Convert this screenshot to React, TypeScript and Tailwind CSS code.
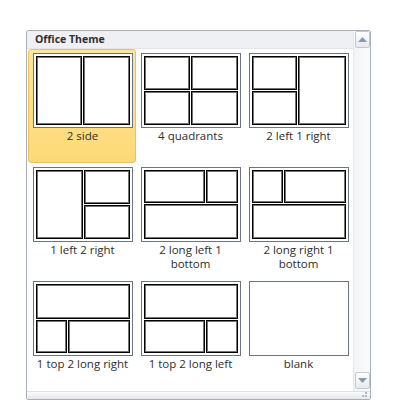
import React from "react";

const R = ({ g = 1 }: { g?: number }) => (
  <div
    className={`border border-black shadow-[inset_0_0_0_1px_rgba(0,0,0,0.55)] bg-white ${g === 2 ? "grow-[2]" : "grow"} basis-0 min-w-0 min-h-0`}
  />
);

const Frame = ({ children }: { children?: React.ReactNode }) => (
  <div className="w-[100px] h-[75px] border border-[#6b7385] bg-white p-[2px] flex">
    {children}
  </div>
);

const layouts: { label: string[]; body: React.ReactNode }[] = [
  {
    label: ["2 side"],
    body: (
      <div className="flex flex-row gap-px flex-1">
        <R />
        <R />
      </div>
    ),
  },
  {
    label: ["4 quadrants"],
    body: (
      <div className="flex flex-col gap-px flex-1">
        <div className="flex flex-row gap-px flex-1 basis-0">
          <R />
          <R />
        </div>
        <div className="flex flex-row gap-px flex-1 basis-0">
          <R />
          <R />
        </div>
      </div>
    ),
  },
  {
    label: ["2 left 1 right"],
    body: (
      <div className="flex flex-row gap-px flex-1">
        <div className="flex flex-col gap-px flex-1 basis-0">
          <R />
          <R />
        </div>
        <R />
      </div>
    ),
  },
  {
    label: ["1 left 2 right"],
    body: (
      <div className="flex flex-row gap-px flex-1">
        <R />
        <div className="flex flex-col gap-px flex-1 basis-0">
          <R />
          <R />
        </div>
      </div>
    ),
  },
  {
    label: ["2 long left 1", "bottom"],
    body: (
      <div className="flex flex-col gap-px flex-1">
        <div className="flex flex-row gap-px flex-1 basis-0">
          <R g={2} />
          <R />
        </div>
        <R />
      </div>
    ),
  },
  {
    label: ["2 long right 1", "bottom"],
    body: (
      <div className="flex flex-col gap-px flex-1">
        <div className="flex flex-row gap-px flex-1 basis-0">
          <R />
          <R g={2} />
        </div>
        <R />
      </div>
    ),
  },
  {
    label: ["1 top 2 long right"],
    body: (
      <div className="flex flex-col gap-px flex-1">
        <R />
        <div className="flex flex-row gap-px flex-1 basis-0">
          <R />
          <R g={2} />
        </div>
      </div>
    ),
  },
  {
    label: ["1 top 2 long left"],
    body: (
      <div className="flex flex-col gap-px flex-1">
        <R />
        <div className="flex flex-row gap-px flex-1 basis-0">
          <R g={2} />
          <R />
        </div>
      </div>
    ),
  },
  { label: ["blank"], body: null },
];

const ScrollBtn = ({ up }: { up: boolean }) => (
  <div className="h-[17px] w-[15px] rounded-[2px] border border-[#c2c7d0] bg-gradient-to-b from-white to-[#e6e9ee] flex items-center justify-center">
    <svg width="9" height="5" viewBox="0 0 9 5">
      {up ? (
        <polygon points="0,5 9,5 4.5,0" fill="#8597bd" />
      ) : (
        <polygon points="0,0 9,0 4.5,5" fill="#8597bd" />
      )}
    </svg>
  </div>
);

export default function App() {
  return (
    <div
      className="w-[403px] h-[418px] bg-white pt-[30px] pl-[26px]"
      style={{ fontFamily: '"Open Sans", "Noto Sans", Arial, sans-serif' }}
    >
      <div className="w-[345px] h-[370px] border border-[#a9afb8] rounded-[2px] flex flex-col overflow-hidden">
        <div className="flex flex-row flex-1 min-h-0">
          <div className="w-[326px] flex flex-col">
            <div className="h-[18px] bg-[#eef0f3] border-b border-[#e2e5e9] pl-[8px] flex items-center text-[10.5px] font-bold text-[#2f2f2f] leading-none">
              Office Theme
            </div>
            <div className="grid grid-cols-[108px_108px_108px] auto-rows-[114px] pl-px">
              {layouts.map((l, i) => (
                <div
                  key={i}
                  className={`flex flex-col items-center pt-[3px] pl-px ${
                    i === 0
                      ? "bg-gradient-to-b from-[#fee69e] to-[#fdd977] border border-[#eac15a] rounded-[3px]"
                      : "border border-transparent"
                  }`}
                >
                  <Frame>{l.body}</Frame>
                  <div className="mt-[1px] text-[11.5px] leading-[14px] text-[#2e2e2e] text-center whitespace-nowrap">
                    {l.label[0]}
                    {l.label.length > 1 && (
                      <>
                        <br />
                        {l.label[1]}
                      </>
                    )}
                  </div>
                </div>
              ))}
            </div>
          </div>
          <div className="w-[17px] border-l border-[#e6e8eb] bg-gradient-to-r from-[#f3f4f6] to-[#fbfbfc] flex flex-col justify-between pl-px pb-[2px]">
            <ScrollBtn up />
            <ScrollBtn up={false} />
          </div>
        </div>
        <div className="h-[8px] border-t border-[#dcdfe3] bg-gradient-to-b from-[#fbfbfc] to-[#e5e7eb] flex justify-end items-end pr-[3px] pb-px">
          <svg width="7" height="6" viewBox="0 0 7 6">
            <rect x="5" y="0" width="2" height="2" fill="#b3b8c0" />
            <rect x="2" y="3" width="2" height="2" fill="#b3b8c0" />
            <rect x="5" y="3" width="2" height="2" fill="#b3b8c0" />
          </svg>
        </div>
      </div>
    </div>
  );
}
